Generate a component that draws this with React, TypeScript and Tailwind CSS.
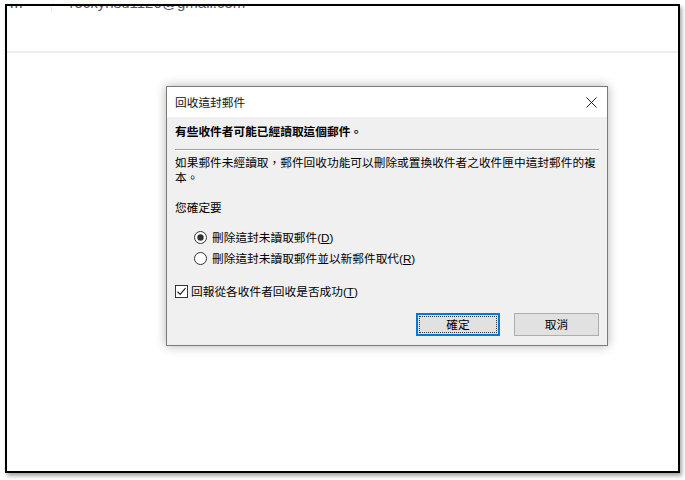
import React from "react";

const font = { fontFamily: '"Liberation Sans", "Noto Sans CJK TC", sans-serif' };

function Radio({ checked }: { checked?: boolean }) {
  return (
    <svg width="13" height="13" viewBox="0 0 13 13" className="shrink-0">
      <circle cx="6.5" cy="6.5" r="6" fill="#fff" stroke="#333" strokeWidth="1" />
      {checked && <circle cx="6.5" cy="6.5" r="3.2" fill="#333" />}
    </svg>
  );
}

function Check() {
  return (
    <svg width="13" height="13" viewBox="0 0 13 13" className="shrink-0">
      <rect x="0.5" y="0.5" width="12" height="12" fill="#fff" stroke="#333" />
      <path d="M2.5 6.8 L5.2 9.4 L10.5 3.2" fill="none" stroke="#222" strokeWidth="1.2" />
    </svg>
  );
}

export default function App() {
  return (
    <div className="relative w-[685px] h-[480px] bg-white overflow-hidden" style={font}>
      {/* outer frame */}
      <div className="absolute left-[5px] top-[4px] w-[675px] h-[469px] border-2 border-black bg-white shadow-[2px_3px_4px_rgba(0,0,0,0.35)] overflow-hidden">
        <div className="h-[47px] border-b-2 border-[#ececec] flex flex-col">
          <div className="flex items-start -mt-[12px]">
            <span className="ml-[3px] text-[15px] leading-[18px] text-[#444] tracking-[2px]">m</span>
            <div className="ml-[26px] w-px h-[18px] bg-[#e8e8e8]" />
            <span className="ml-[18px] text-[15px] leading-[18px] text-[#555]">rockyhsu1120@gmail.com</span>
          </div>
        </div>
      </div>

      {/* dialog */}
      <div className="absolute left-[166px] top-[86px] w-[442px] h-[260px] border border-[#7a7a7a] bg-[#f0f0f0] shadow-[0_0_10px_rgba(0,0,0,0.3)] flex flex-col text-[11.7px] text-black leading-[15px]">
        <div className="h-[30px] bg-white flex items-center justify-between pl-[8px] pr-[10px]">
          <span className="text-[11.7px] text-[#111]">回收這封郵件</span>
          <svg width="11" height="11" viewBox="0 0 11 11">
            <path d="M0.5 0.5 L10.5 10.5 M10.5 0.5 L0.5 10.5" stroke="#222" strokeWidth="1" />
          </svg>
        </div>
        <div className="flex flex-col px-[8px] pt-[7px]">
          <div className="font-bold">有些收件者可能已經讀取這個郵件。</div>
          <div className="mt-[10px] h-[2px] border-t border-[#a0a0a0] border-b border-b-white" />
          <div className="mt-[4px] pr-[2px]">如果郵件未經讀取，郵件回收功能可以刪除或置換收件者之收件匣中這封郵件的複本。</div>
          <div className="mt-[15px]">您確定要</div>
          <div className="mt-[15px] ml-[19px] flex items-center gap-[5px]">
            <Radio checked />
            <span>刪除這封未讀取郵件(<span className="underline">D</span>)</span>
          </div>
          <div className="mt-[6px] ml-[19px] flex items-center gap-[5px]">
            <Radio />
            <span>刪除這封未讀取郵件並以新郵件取代(<span className="underline">R</span>)</span>
          </div>
          <div className="mt-[18px] flex items-center gap-[3px]">
            <Check />
            <span>回報從各收件者回收是否成功(<span className="underline">T</span>)</span>
          </div>
          <div className="mt-[14px] flex justify-end gap-[14px] pr-[0px]">
            <div className="w-[84px] h-[23px] border-2 border-[#0078d7] bg-[#e1e1e1] p-[1px]">
              <div className="w-full h-full border border-dotted border-[#333] flex items-center justify-center">確定</div>
            </div>
            <div className="w-[85px] h-[23px] border border-[#adadad] bg-[#e1e1e1] flex items-center justify-center">取消</div>
          </div>
        </div>
      </div>
    </div>
  );
}
